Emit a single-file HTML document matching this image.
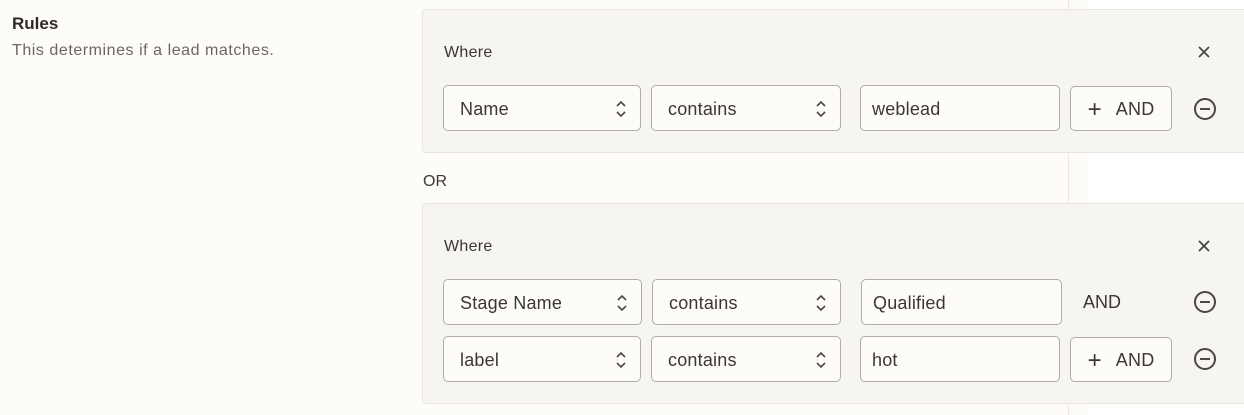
<!DOCTYPE html>
<html><head><style>
*{box-sizing:border-box;margin:0;padding:0}
body{width:1244px;height:415px;overflow:hidden;background:#fdfcf9;font-family:"Liberation Sans",sans-serif;color:#3b3733;position:relative}
.abs{position:absolute}
.vline{left:1068px;top:0;width:1px;height:415px;background:#ebe8e1}
.white{left:1089px;top:0;width:155px;height:415px;background:#fff}
.panel{left:422px;width:840px;background:#f6f5f2;border:1px solid #e7e5de;border-right:none;border-radius:4px 0 0 4px}
.sel,.inp,.btn{position:absolute;height:46px;border:1px solid #b0ada8;border-radius:5px;background:#fdfcf9;font-size:18px;line-height:46px;padding-left:16px;letter-spacing:0.2px}
.inp{padding-left:11px}
.btn{padding-left:0;text-align:center}
.chev{position:absolute;right:13px;top:13px}
.where{font-size:16px;letter-spacing:0.3px}
.minus{position:absolute;width:22px;height:22px;border:2px solid #4a4643;border-radius:50%}
.minus:after{content:"";position:absolute;left:4px;top:8px;width:10px;height:2px;background:#4a4643}
</style></head><body>
<div class="abs white"></div>
<div class="abs vline"></div>
<div class="abs" style="left:12px;top:14px;font-size:17px;font-weight:bold;color:#2e2a27">Rules</div>
<div class="abs" style="left:12px;top:42px;font-size:16px;letter-spacing:0.55px;color:#6b6661">This determines if a lead matches.</div>

<div class="abs panel" style="top:9px;height:144px"></div>
<div class="abs where" style="left:444px;top:44px">Where</div>
<svg class="abs" style="left:1197px;top:45px" width="14" height="14"><path d="M2 2L12 12M12 2L2 12" stroke="#4a4643" stroke-width="1.8"/></svg>

<div class="sel" style="left:443px;top:85px;width:198px">Name<svg class="chev" width="12" height="20"><path d="M2 7L6 3L10 7M2 13L6 17L10 13" fill="none" stroke="#4a4643" stroke-width="1.6"/></svg></div>
<div class="sel" style="left:651px;top:85px;width:190px">contains<svg class="chev" width="12" height="20"><path d="M2 7L6 3L10 7M2 13L6 17L10 13" fill="none" stroke="#4a4643" stroke-width="1.6"/></svg></div>
<div class="inp" style="left:860px;top:85px;width:200px">weblead</div>
<div class="btn" style="left:1070px;top:86px;width:102px;height:45px;line-height:45px"><span style="font-size:24px;vertical-align:-2px;margin-right:14px">+</span>AND</div>
<div class="minus" style="left:1194px;top:98px"></div>

<div class="abs" style="left:423px;top:173px;font-size:16px">OR</div>

<div class="abs panel" style="top:203px;height:201px"></div>
<div class="abs where" style="left:444px;top:238px">Where</div>
<svg class="abs" style="left:1197px;top:239px" width="14" height="14"><path d="M2 2L12 12M12 2L2 12" stroke="#4a4643" stroke-width="1.8"/></svg>

<div class="sel" style="left:443px;top:279px;width:199px">Stage Name<svg class="chev" width="12" height="20"><path d="M2 7L6 3L10 7M2 13L6 17L10 13" fill="none" stroke="#4a4643" stroke-width="1.6"/></svg></div>
<div class="sel" style="left:652px;top:279px;width:189px">contains<svg class="chev" width="12" height="20"><path d="M2 7L6 3L10 7M2 13L6 17L10 13" fill="none" stroke="#4a4643" stroke-width="1.6"/></svg></div>
<div class="inp" style="left:861px;top:279px;width:201px">Qualified</div>
<div class="abs" style="left:1083px;top:292px;font-size:18px">AND</div>
<div class="minus" style="left:1194px;top:291px"></div>

<div class="sel" style="left:443px;top:336px;width:198px">label<svg class="chev" width="12" height="20"><path d="M2 7L6 3L10 7M2 13L6 17L10 13" fill="none" stroke="#4a4643" stroke-width="1.6"/></svg></div>
<div class="sel" style="left:651px;top:336px;width:190px">contains<svg class="chev" width="12" height="20"><path d="M2 7L6 3L10 7M2 13L6 17L10 13" fill="none" stroke="#4a4643" stroke-width="1.6"/></svg></div>
<div class="inp" style="left:860px;top:336px;width:200px">hot</div>
<div class="btn" style="left:1070px;top:337px;width:102px;height:45px;line-height:45px"><span style="font-size:24px;vertical-align:-2px;margin-right:14px">+</span>AND</div>
<div class="minus" style="left:1194px;top:348px"></div>
</body></html>
